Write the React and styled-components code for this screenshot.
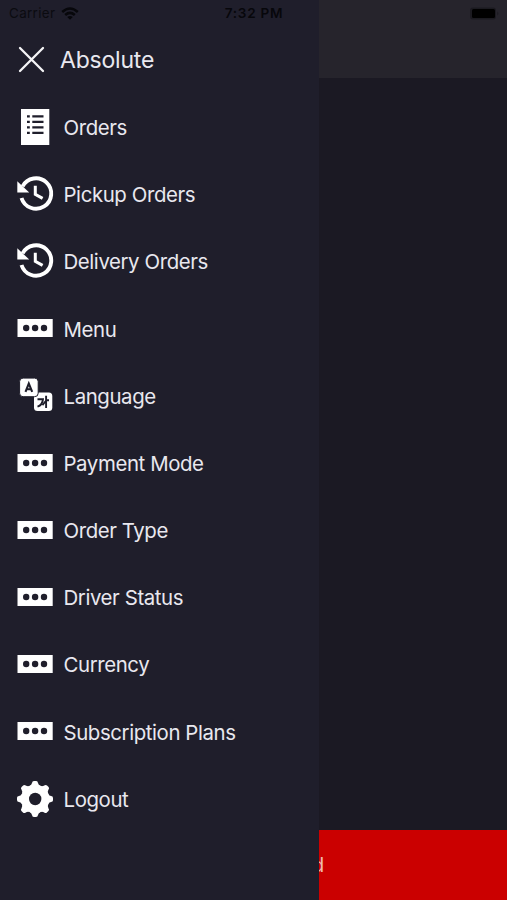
import React from 'react';
import styled, { createGlobalStyle } from 'styled-components';

const GlobalStyle = createGlobalStyle`
  * { box-sizing: border-box; }
  body { margin: 0; background: #1b1923; }
`;

const Screen = styled.div`
  position: relative;
  display: grid;
  grid-template-columns: 319px 1fr;
  grid-template-rows: 900px;
  width: 507px;
  height: 900px;
  overflow: hidden;
  font-family: Inter, "Liberation Sans", sans-serif;
`;

const StatusBar = styled.div`
  position: absolute;
  top: 0;
  left: 0;
  right: 0;
  height: 27px;
  display: grid;
  grid-template-columns: 1fr auto 1fr;
  align-items: center;
  padding: 0 8px 0 9px;
  color: #07070b;
  font-size: 13.4px;
  line-height: 27px;
`;

const Network = styled.div`
  display: flex;
  align-items: center;
  gap: 6px;
  color: #0b0b10;
  letter-spacing: 0.35px;
`;

const Clock = styled.div`
  font-weight: 600;
  font-size: 13.6px;
  letter-spacing: 0.7px;
`;

const Power = styled.div`
  display: flex;
  justify-content: flex-end;
`;

const Drawer = styled.nav`
  background: #1f1e2b;
  color: #e9e8ef;
`;

const DrawerHeader = styled.header`
  display: flex;
  align-items: center;
  gap: 15px;
  height: 94.4px;
  padding: 24px 0 0 18px;
`;

const Title = styled.h1`
  margin: 0;
  font-size: 23px;
  font-weight: 400;
  line-height: 28px;
  letter-spacing: -0.2px;
  padding-top: 1px;
`;

const MenuList = styled.ul`
  list-style: none;
  margin: 0;
  padding: 0;
`;

const MenuItem = styled.li`
  display: flex;
  align-items: center;
  height: 67.2px;
  padding-left: 17px;
`;

const IconSlot = styled.span`
  display: flex;
  width: 46.5px;
  margin-top: -2.6px;
`;

const Label = styled.span`
  font-size: 20.4px;
  line-height: 26px;
  letter-spacing: -0.4px;
  white-space: nowrap;
`;

const Backdrop = styled.main`
  display: grid;
  grid-template-rows: 78px 1fr 70px;
  background: #1b1923;
  overflow: hidden;
`;

const NavBar = styled.div`
  background: #26242c;
`;

const ActionBar = styled.button`
  grid-row: 3;
  display: flex;
  align-items: center;
  border: 0;
  margin: 0;
  padding: 0;
  background: #cb0000;
  color: #efb9ae;
  font: 400 20px/24px Inter, sans-serif;
  overflow: hidden;
`;

const ActionText = styled.span`
  margin-left: -7px;
`;

const Svg = styled.svg`
  display: block;
  flex: none;
  overflow: visible;
`;

const WifiIcon = () => (
  <Svg width="18" height="13" viewBox="0 0 18 13" fill="none" stroke="#07070b" strokeWidth="2.5">
    <path d="M1.2 5 Q9 -2.1 16.8 5" />
    <path d="M4.2 8 Q9 3.8 13.8 8" />
    <path d="M9 12.8 L6.2 10 Q9 7.8 11.8 10 Z" fill="#07070b" stroke="none" />
  </Svg>
);

const BatteryIcon = () => (
  <Svg width="30" height="13" viewBox="0 0 30 13">
    <rect x="1" y="0.5" width="26" height="12" rx="3" fill="#1b1a20" />
    <rect x="3" y="2" width="23" height="9" rx="1.5" fill="#000" />
    <path d="M28.3 4.5 Q30.5 6.5 28.3 8.5 Z" fill="#1b1a20" />
  </Svg>
);

const CloseIcon = () => (
  <Svg width="27" height="27" viewBox="0 0 27 27" stroke="#f5f5f7" strokeWidth="2.3" strokeLinecap="round">
    <path d="M2 2 L25 25 M25 2 L2 25" />
  </Svg>
);

const OrdersIcon = () => (
  <Svg width="36" height="36" viewBox="0 0 36 36">
    <path d="M4 0 H32.3 V36 H4 Z" fill="#fff" />
    <g stroke="#1f1e2b" strokeWidth="2.3">
      <path d="M10 7.3 H12.8 M10 12.8 H12.8 M10 18.3 H12.8 M10 23.9 H12.8" />
      <path d="M15.3 7.3 H26.5 M15.3 12.8 H26.5 M15.3 18.3 H26.5 M15.3 23.9 H26.5" />
    </g>
  </Svg>
);

const HistoryIcon = () => (
  <Svg width="36" height="36" viewBox="0 0 36 36" fill="none" stroke="#fff">
    <path d="M5.6 10.4 A15.2 15.2 0 1 1 4.5 22" strokeWidth="3.9" />
    <path d="M0.3 5.2 V16.6 H12.2 Z" fill="#fff" stroke="none" />
    <path d="M18.3 9.8 V18.3 L25.6 22.4" strokeWidth="3" />
  </Svg>
);

const DotsIcon = () => (
  <Svg width="36" height="36" viewBox="0 0 36 36">
    <path d="M0.5 9 H35.7 V27 H0.5 Z" fill="#fff" />
    <g fill="#1f1e2b">
      <circle cx="9.2" cy="18" r="3.2" />
      <circle cx="18.1" cy="18" r="3.2" />
      <circle cx="27" cy="18" r="3.2" />
    </g>
  </Svg>
);

const LanguageIcon = () => (
  <Svg width="36" height="36" viewBox="0 0 36 36">
    <rect x="17" y="15.4" width="18.3" height="18.5" rx="3.5" fill="#fff" />
    <rect x="2.6" y="1.1" width="18.6" height="18.6" rx="3.5" fill="#fff" stroke="#1f1e2b" strokeWidth="1" />
    <g fill="none" stroke="#1f1e2b">
      <path d="M8.5 14.8 L11.8 6.6 L15.2 14.8 M9.7 12.2 H14" strokeWidth="2.1" />
      <path d="M20.5 22.2 H26 Q25.5 28.1 20.5 29.7" strokeWidth="1.9" />
      <path d="M29.1 18.8 V31.1 M29.1 23.2 H32 M28.8 24 L25.4 28.2" strokeWidth="1.9" />
    </g>
  </Svg>
);

const teeth = [0, 45, 90, 135, 180, 225, 270, 315];

const GearIcon = () => (
  <Svg width="36" height="36" viewBox="0 0 36 36">
    <g fill="#fff">
      <circle cx="18.2" cy="18" r="14.2" />
      {teeth.map((angle) => (
        <path
          key={angle}
          d="M12.2 5.3 Q14.7 4.1 15 2 Q15.2 0 17 0 H19.2 Q20.8 0 21 2 Q21.3 4.1 23.8 5.3 Z"
          transform={`rotate(${angle} 18 18)`}
        />
      ))}
    </g>
    <circle cx="18.2" cy="18" r="6.2" fill="#1f1e2b" />
  </Svg>
);

const menu = [
  ['Orders', OrdersIcon],
  ['Pickup Orders', HistoryIcon],
  ['Delivery Orders', HistoryIcon],
  ['Menu', DotsIcon],
  ['Language', LanguageIcon],
  ['Payment Mode', DotsIcon],
  ['Order Type', DotsIcon],
  ['Driver Status', DotsIcon],
  ['Currency', DotsIcon],
  ['Subscription Plans', DotsIcon],
  ['Logout', GearIcon],
];

export default function App() {
  return (
    <>
      <GlobalStyle />
      <Screen>
        <Drawer>
          <DrawerHeader>
            <CloseIcon />
            <Title>Absolute</Title>
          </DrawerHeader>
          <MenuList>
            {menu.map(([name, Icon]) => (
              <MenuItem key={name}>
                <IconSlot><Icon /></IconSlot>
                <Label>{name}</Label>
              </MenuItem>
            ))}
          </MenuList>
        </Drawer>
        <Backdrop>
          <NavBar />
          <ActionBar><ActionText>d</ActionText></ActionBar>
        </Backdrop>
        <StatusBar>
          <Network>Carrier <WifiIcon /></Network>
          <Clock>7:32 PM</Clock>
          <Power><BatteryIcon /></Power>
        </StatusBar>
      </Screen>
    </>
  );
}
